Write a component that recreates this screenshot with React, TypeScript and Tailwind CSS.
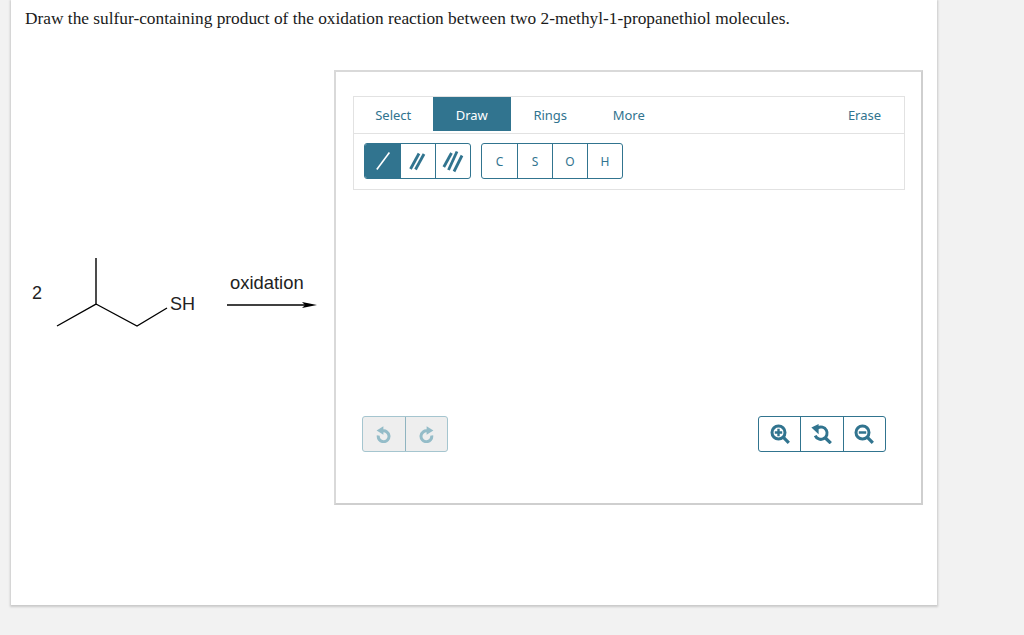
const tabs = ['Select', 'Draw', 'Rings', 'More'];
const atoms = ['C', 'S', 'O', 'H'];

function Bonds({ count }: { count: number }) {
  return (
    <svg width="24" height="24" viewBox="0 0 24 24" stroke="currentColor" fill="none">
      {count === 1 && <line x1="5.8" y1="20.4" x2="18.4" y2="3.6" strokeWidth="1.6" />}
      {count === 2 && (
        <>
          <line x1="4.5" y1="20" x2="13" y2="4.5" strokeWidth="2.8" />
          <line x1="9.5" y1="20.5" x2="18" y2="5" strokeWidth="2.8" />
        </>
      )}
      {count === 3 && (
        <>
          <line x1="2.8" y1="18" x2="10.5" y2="4" strokeWidth="2.8" />
          <line x1="7.5" y1="21" x2="16" y2="2.5" strokeWidth="2.8" />
          <line x1="13" y1="22.5" x2="21" y2="6.5" strokeWidth="2.8" />
        </>
      )}
    </svg>
  );
}

function UndoArrow({ flip }: { flip?: boolean }) {
  return (
    <svg width="15" height="17" viewBox="0 0 15 17" fill="none" stroke="currentColor" className={flip ? '-scale-x-100' : ''}>
      <path d="M6.5 5 A5.4 5.4 0 1 1 2.3 9.4" strokeWidth="3" />
      <path d="M7.4 0.3 V8.8 L0.6 4.4 Z" fill="currentColor" stroke="none" />
    </svg>
  );
}

function SearchIcon({ mark }: { mark: 'plus' | 'minus' }) {
  return (
    <svg width="20" height="20" viewBox="0 0 20 20" fill="none" stroke="currentColor">
      <circle cx="8.5" cy="8.5" r="6.5" strokeWidth="3" />
      <path d="M13.2 13.2 L18.8 18.8" strokeWidth="3.2" />
      <path d="M4.8 8.5 H12.2" strokeWidth="2.4" />
      {mark === 'plus' && <path d="M8.5 4.8 V12.2" strokeWidth="2.4" />}
    </svg>
  );
}

function ResetZoom() {
  return (
    <svg width="21" height="20" viewBox="0 0 21 20" fill="none" stroke="currentColor">
      <path d="M6.6 3.9 A6.2 6.2 0 1 1 4.2 11.6" strokeWidth="3" />
      <path d="M7.6 0 V10.2 L0.4 3.6 Z" fill="currentColor" stroke="none" />
      <path d="M14.4 14 L19.8 19.2" strokeWidth="3.2" />
    </svg>
  );
}

function Molecule() {
  return (
    <svg width="323" height="90" viewBox="0 0 323 90" className="block">
      <g stroke="#000" strokeWidth="1.4" fill="none">
        <path d="M85 8 V54 L46 76 M85 54 L126 76 L156 58" />
        <line x1="216" y1="55" x2="296" y2="55" />
      </g>
      <path d="M291 52 L306 55 L291 58 L294 55 Z" fill="#000" />
      <g fontFamily="'Liberation Sans', Arial, sans-serif" fill="#222">
        <text x="21" y="49" fontSize="18">2</text>
        <text x="159" y="60" fontSize="18">SH</text>
        <text x="219" y="39" fontSize="18.4">oxidation</text>
      </g>
    </svg>
  );
}

export default function App() {
  return (
    <div className="w-[1024px] h-[635px] overflow-hidden bg-[#f2f2f2] pl-[11px]">
      <div className="w-[926px] h-[605px] bg-white shadow-[0_1px_2px_1px_rgba(0,0,0,0.17)] pt-[9px]">
        <p className="pl-[14px] text-[17.33px] leading-[20px] text-[#1a1a1a] font-['Liberation_Serif',serif]">
          Draw the sulfur-containing product of the oxidation reaction between two 2-methyl-1-propanethiol molecules.
        </p>
        <div className="flex items-start mt-[41px]">
          <div className="w-[323px] shrink-0 pt-[180px]">
            <Molecule />
          </div>
          <div className="w-[589px] h-[435px] border-2 border-[#cfcfcf] border-t-[#d9d9d9] border-l-[#d9d9d9] flex flex-col justify-between pt-[24px] pb-[51px] pl-[17px] pr-[16px] font-['Noto_Sans',sans-serif] text-[#31748f]">
            <div className="h-[94px] border border-[#e2e2e2]">
              <div className="h-[37px] border-b border-[#e2e2e2] flex justify-between">
                <div className="flex">
                  {tabs.map((t) => (
                    <div
                      key={t}
                      className={`w-[78.5px] h-[34px] pt-[3px] flex items-center justify-center text-[13px] ${t === 'Draw' ? 'bg-[#31748f] text-white' : ''}`}
                    >
                      {t}
                    </div>
                  ))}
                </div>
                <div className="w-[79px] h-[34px] pt-[3px] flex items-center justify-center text-[13px]">Erase</div>
              </div>
              <div className="flex gap-[10px] pt-[9px] pl-[10px]">
                <div className="flex h-[36px] border border-[#31748f] rounded-[3px] overflow-hidden">
                  {[1, 2, 3].map((n) => (
                    <div
                      key={n}
                      className={`w-[35px] flex items-center justify-center ${n > 1 ? 'border-l border-[#31748f]' : 'bg-[#31748f] text-white'}`}
                    >
                      <Bonds count={n} />
                    </div>
                  ))}
                </div>
                <div className="flex h-[36px] border border-[#31748f] rounded-[3px] overflow-hidden">
                  {atoms.map((a, i) => (
                    <div
                      key={a}
                      className={`w-[35px] pt-[2px] flex items-center justify-center text-[12px] ${i > 0 ? 'border-l border-[#31748f]' : ''}`}
                    >
                      {a}
                    </div>
                  ))}
                </div>
              </div>
            </div>
            <div className="flex justify-between pl-[9px] pr-[19px]">
              <div className="flex h-[36px] w-[86px] border border-[#a5c5cf] rounded-[3px] bg-[#eeeeee] text-[#94bcc8] overflow-hidden">
                <div className="flex-1 flex items-center justify-center">
                  <UndoArrow />
                </div>
                <div className="flex-1 flex items-center justify-center border-l border-[#8fb4c0]">
                  <UndoArrow flip />
                </div>
              </div>
              <div className="flex h-[36px] w-[128px] border border-[#31748f] rounded-[3px] overflow-hidden">
                <div className="flex-1 flex items-center justify-center">
                  <SearchIcon mark="plus" />
                </div>
                <div className="flex-1 flex items-center justify-center border-l border-[#31748f]">
                  <ResetZoom />
                </div>
                <div className="flex-1 flex items-center justify-center border-l border-[#31748f]">
                  <SearchIcon mark="minus" />
                </div>
              </div>
            </div>
          </div>
        </div>
      </div>
    </div>
  );
}
